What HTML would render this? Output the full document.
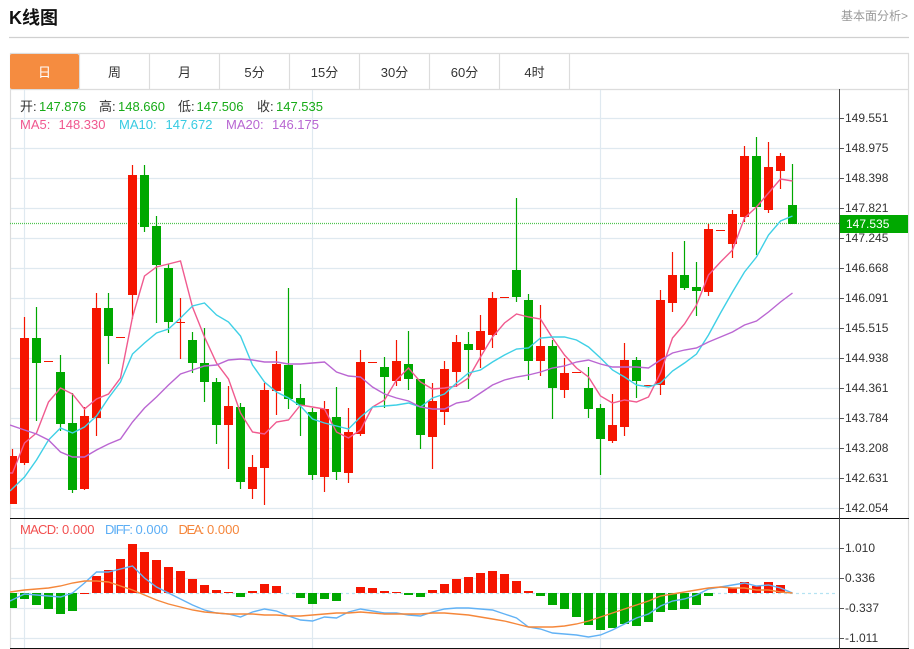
<!DOCTYPE html>
<html lang="zh">
<head>
<meta charset="utf-8">
<title>K线图</title>
<style>
html,body{margin:0;padding:0;background:#fff;overflow:hidden}
svg{display:block}
text{font-family:"Liberation Sans","Noto Sans CJK SC",sans-serif}
</style>
</head>
<body>
<svg width="914" height="649" viewBox="0 0 914 649" xmlns="http://www.w3.org/2000/svg">
<defs><clipPath id="c"><rect x="10" y="89" width="829" height="559"/></clipPath></defs>
<rect width="914" height="649" fill="#fff"/>
<text x="9" y="24" font-size="18" font-weight="bold" fill="#111">K线图</text>
<text x="841" y="20" font-size="12" fill="#999">基本面分析&gt;</text>
<path d="M9 37.5H909" stroke="#d0d0d0" stroke-width="1.2"/>
<!-- frame and tabs -->
<path d="M10 53.5H909M10 89.5H909M10.5 53V648M908.5 53V648M79.5 54V89M149.5 54V89M219.5 54V89M289.5 54V89M359.5 54V89M429.5 54V89M499.5 54V89M569.5 54V89" stroke="#dcdcdc" stroke-width="1.2" fill="none"/>
<rect x="10" y="54" width="69" height="35" rx="2" fill="#f58c40"/>
<g font-size="13" fill="#333" text-anchor="middle">
<text x="44.5" y="77" fill="#fff">日</text>
<text x="114.5" y="77">周</text>
<text x="184.5" y="77">月</text>
<text x="254.5" y="77">5分</text>
<text x="324.5" y="77">15分</text>
<text x="394.5" y="77">30分</text>
<text x="464.5" y="77">60分</text>
<text x="534.5" y="77">4时</text>
</g>
<!-- grid -->
<path d="M11 118.5H839M11 148.5H839M11 178.5H839M11 208.5H839M11 238.5H839M11 268.5H839M11 298.5H839M11 328.5H839M11 358.5H839M11 388.5H839M11 418.5H839M11 448.5H839M11 478.5H839M11 508.5H839M11 548.5H839M11 578.5H839M11 608.5H839M11 638.5H839M24.5 90V648M312.5 90V648M600.5 90V648" stroke="#dfe9f0" stroke-width="1.2" fill="none"/>
<g clip-path="url(#c)">
<path d="M10 223.5H839" stroke="#4ec44e" stroke-width="1.3" stroke-dasharray="1 1" fill="none"/>
<!-- red wicks -->
<path fill="none" stroke="#f51500" stroke-width="1.2" d="M12.5 449V504M24.5 317V465M84.5 407V490M96.5 293V436M132.5 165V319M180.5 298V359M228.5 386V469M252.5 455V499M264.5 383V505M276.5 351V415M324.5 401V492M348.5 408V483M360.5 350V436M396.5 340V386M432.5 383V469M444.5 361V425M456.5 335V387M480.5 315V368M492.5 292V348M540.5 305V376M564.5 358V398M612.5 394V443M624.5 343V436M660.5 290V395M672.5 252V312M708.5 224V296M732.5 210V258M744.5 146V222M768.5 142V213M780.5 153V189"/>
<!-- red bodies -->
<path fill="none" stroke="#f51500" stroke-width="9" d="M12.5 456V504M24.5 338V463M48.5 361V362M84.5 416V489M96.5 308V418M120.5 337V338M132.5 175V295M180.5 322V323M228.5 406V425M252.5 467V489M264.5 390V468M276.5 364V391M324.5 409V477M348.5 432V473M360.5 362V434M372.5 362V363M396.5 361V381M432.5 401V437M444.5 369V412M456.5 342V372M480.5 331V350M492.5 298V335M504.5 297V298M540.5 346V361M564.5 373V390M576.5 372V373M612.5 425V441M624.5 360V427M648.5 385V386M660.5 300V385M672.5 275V303M708.5 229V292M720.5 230V231M732.5 214V244M744.5 156V217M768.5 167V210M780.5 156V171"/>
<!-- green wicks -->
<path fill="none" stroke="#00a800" stroke-width="1.2" d="M36.5 307V421M60.5 355V431M72.5 393V493M108.5 293V364M144.5 165V232M156.5 216V323M168.5 264V333M192.5 332V373M204.5 328V402M216.5 378V444M240.5 403V489M288.5 288V409M300.5 384V436M312.5 408V480M336.5 387V480M384.5 357V408M408.5 331V390M420.5 379V449M468.5 332V389M516.5 198V302M528.5 294V380M552.5 340V419M588.5 367V418M600.5 404V475M636.5 357V398M684.5 241V290M696.5 262V316M756.5 137V255M792.5 164V224"/>
<!-- green bodies -->
<path fill="none" stroke="#00a800" stroke-width="9" d="M36.5 338V363M60.5 372V424M72.5 423V490M108.5 308V336M144.5 175V227M156.5 226V265M168.5 268V322M192.5 340V363M204.5 363V382M216.5 382V425M240.5 407V482M288.5 365V399M300.5 398V405M312.5 412V475M336.5 417V472M384.5 367V377M408.5 364V379M420.5 379V435M468.5 344V350M516.5 270V297M528.5 300V361M552.5 346V388M588.5 388V409M600.5 408V439M636.5 360V381M684.5 275V288M696.5 287V291M756.5 156V207M792.5 205V224"/>
<!-- MA5 -->
<polyline fill="none" stroke="#f05a8f" stroke-width="1.4" points="10,473 12.5,473 24.5,443 36.5,433 48.5,402 60.5,388 72.5,394 84.5,409 96.5,399 108.5,394 120.5,378 132.5,317 144.5,276 156.5,267 168.5,264 180.5,261 192.5,307 204.5,337 216.5,363 228.5,379 240.5,413 252.5,432 264.5,434 276.5,422 288.5,420 300.5,405 312.5,407 324.5,409 336.5,432 348.5,438 360.5,430 372.5,407 384.5,400 396.5,380 408.5,368 420.5,382 432.5,389 444.5,388 456.5,386 468.5,378 480.5,357 492.5,337 504.5,323 516.5,314 528.5,317 540.5,319 552.5,338 564.5,355 576.5,368 588.5,377 600.5,396 612.5,403 624.5,400 636.5,402 648.5,397 660.5,373 672.5,338 684.5,324 696.5,305 708.5,275 720.5,262 732.5,250 744.5,218 756.5,207 768.5,193 780.5,179 792.5,181"/>
<!-- MA10 -->
<polyline fill="none" stroke="#3fd0e6" stroke-width="1.4" points="10,491 24.5,477 36.5,460 48.5,440 60.5,428 72.5,433 84.5,427 96.5,416 108.5,398 120.5,382 132.5,354 144.5,343 156.5,333 168.5,329 180.5,318 192.5,306 204.5,303 216.5,315 228.5,322 240.5,336 252.5,365 264.5,382 276.5,392 288.5,398 300.5,406 312.5,419 324.5,423 336.5,426 348.5,429 360.5,417 372.5,407 384.5,406 396.5,405 408.5,403 420.5,407 432.5,398 444.5,394 456.5,383 468.5,373 480.5,370 492.5,362 504.5,355 516.5,349 528.5,348 540.5,338 552.5,337 564.5,337 576.5,340 588.5,347 600.5,358 612.5,370 624.5,377 636.5,385 648.5,387 660.5,383 672.5,371 684.5,363 696.5,354 708.5,335 720.5,313 732.5,292 744.5,272 756.5,257 768.5,235 780.5,221 792.5,216"/>
<!-- MA20 -->
<polyline fill="none" stroke="#ba66d2" stroke-width="1.4" points="10,425 24.5,430 36.5,434 48.5,440 60.5,452 72.5,457 84.5,457 96.5,450 108.5,444 120.5,439 132.5,422 144.5,408 156.5,397 168.5,385 180.5,374 192.5,370 204.5,366 216.5,365 228.5,360 240.5,359 252.5,360 264.5,362 276.5,362 288.5,364 300.5,364 312.5,363 324.5,362 336.5,372 348.5,376 360.5,377 372.5,387 384.5,394 396.5,398 408.5,401 420.5,407 432.5,409 444.5,409 456.5,403 468.5,401 480.5,393 492.5,385 504.5,380 516.5,377 528.5,375 540.5,372 552.5,368 564.5,366 576.5,362 588.5,360 600.5,364 612.5,367 624.5,367 636.5,367 648.5,368 660.5,360 672.5,353 684.5,350 696.5,348 708.5,342 720.5,337 732.5,332 744.5,325 756.5,321 768.5,312 780.5,302 792.5,293"/>
<!-- MACD -->
<path d="M10 593.5H836" stroke="#b5e3f2" stroke-width="1.3" stroke-dasharray="3 3" fill="none"/>
<path fill="none" stroke="#f51500" stroke-width="9" d="M84.5 593V594M96.5 576V593M108.5 570V593M120.5 559V593M132.5 544V593M144.5 552V593M156.5 560V593M168.5 567V593M180.5 571V593M192.5 579V593M204.5 585V593M216.5 590V593M228.5 592V593M252.5 591V593M264.5 584V593M276.5 586V593M360.5 587V593M372.5 588V593M384.5 591V593M396.5 592V593M432.5 590V593M444.5 584V593M456.5 579V593M468.5 577V593M480.5 573V593M492.5 571V593M504.5 574V593M516.5 581V593M528.5 591V593M732.5 588V593M744.5 582V593M756.5 586V593M768.5 582V593M780.5 585V593"/>
<path fill="none" stroke="#00a800" stroke-width="9" d="M12.5 593V608M24.5 593V599M36.5 593V605M48.5 593V609M60.5 593V614M72.5 593V611M240.5 593V597M300.5 593V598M312.5 593V604M324.5 593V599M336.5 593V601M408.5 593V595M420.5 593V597M540.5 593V596M552.5 593V605M564.5 593V609M576.5 593V617M588.5 593V625M600.5 593V630M612.5 593V628M624.5 593V624M636.5 593V626M648.5 593V622M660.5 593V612M672.5 593V610M684.5 593V609M696.5 593V605M708.5 593V596"/>
<polyline fill="none" stroke="#62b2f5" stroke-width="1.4" points="10,601 24.5,594 36.5,595 48.5,596 60.5,597 72.5,593 84.5,583 96.5,572 108.5,572 120.5,569 132.5,566 144.5,578 156.5,587 168.5,593 180.5,599 192.5,605 204.5,610 216.5,613 228.5,614 240.5,617 252.5,612 264.5,609 276.5,611 288.5,616 300.5,620 312.5,621 324.5,617 336.5,618 348.5,612 360.5,609 372.5,611 384.5,613 396.5,613 408.5,615 420.5,616 432.5,612 444.5,609 456.5,608 468.5,608 480.5,609 492.5,610 504.5,614 516.5,618 528.5,627 540.5,629 552.5,633 564.5,634 576.5,635 588.5,637 600.5,635 612.5,630 624.5,624 636.5,618 648.5,614 660.5,606 672.5,601 684.5,599 696.5,595 708.5,589 720.5,587 732.5,585 744.5,583 756.5,586 768.5,585 780.5,588 792.5,593"/>
<polyline fill="none" stroke="#f5873a" stroke-width="1.4" points="10,592 24.5,590 36.5,589 48.5,588 60.5,586 72.5,583 84.5,581 96.5,581 108.5,582 120.5,586 132.5,590 144.5,595 156.5,600 168.5,604 180.5,607 192.5,610 204.5,612 216.5,613 228.5,614 240.5,614 252.5,614 264.5,615 276.5,615 288.5,616 300.5,616 312.5,615 324.5,614 336.5,613 348.5,613 360.5,612 372.5,613 384.5,614 396.5,614 408.5,614 420.5,614 432.5,613 444.5,613 456.5,614 468.5,615 480.5,617 492.5,619 504.5,621 516.5,624 528.5,627 540.5,627 552.5,627 564.5,626 576.5,624 588.5,621 600.5,617 612.5,613 624.5,609 636.5,605 648.5,601 660.5,596 672.5,594 684.5,592 696.5,590 708.5,588 720.5,587 732.5,588 744.5,588 756.5,590 768.5,590 780.5,592 792.5,593"/>
</g>
<!-- axes -->
<path d="M10 518.5H909M10 648.5H909" stroke="#111" fill="none"/>
<path d="M839.5 89V649" stroke="#444" fill="none"/>
<path d="M840 118.5h4M840 148.5h4M840 178.5h4M840 208.5h4M840 238.5h4M840 268.5h4M840 298.5h4M840 328.5h4M840 358.5h4M840 388.5h4M840 418.5h4M840 448.5h4M840 478.5h4M840 508.5h4M840 548.5h4M840 578.5h4M840 608.5h4M840 638.5h4" stroke="#555" fill="none"/>
<g font-size="12" fill="#333">
<text x="845" y="122">149.551</text>
<text x="845" y="152">148.975</text>
<text x="845" y="182">148.398</text>
<text x="845" y="212">147.821</text>
<text x="845" y="242">147.245</text>
<text x="845" y="272">146.668</text>
<text x="845" y="302">146.091</text>
<text x="845" y="332">145.515</text>
<text x="845" y="362">144.938</text>
<text x="845" y="392">144.361</text>
<text x="845" y="422">143.784</text>
<text x="845" y="452">143.208</text>
<text x="845" y="482">142.631</text>
<text x="845" y="512">142.054</text>
<text x="845" y="552">1.010</text>
<text x="845" y="582">0.336</text>
<text x="845" y="612">-0.337</text>
<text x="845" y="642">-1.011</text>
</g>
<rect x="840" y="215" width="68" height="18" fill="#00a800"/>
<text x="846" y="228" font-size="12" fill="#fff">147.535</text>
<!-- info text -->
<g font-size="13">
<g fill="#333"><text x="20" y="111">开:</text><text x="99" y="111">高:</text><text x="178" y="111">低:</text><text x="257" y="111">收:</text></g>
<g fill="#17ab17"><text x="39" y="111">147.876</text><text x="118" y="111">148.660</text><text x="196.5" y="111">147.506</text><text x="276" y="111">147.535</text></g>
<g fill="#f0588f"><text x="20" y="129">MA5:</text><text x="58.5" y="129">148.330</text></g>
<g fill="#38cbe2"><text x="119" y="129">MA10:</text><text x="165.5" y="129">147.672</text></g>
<g fill="#b866d2"><text x="226" y="129">MA20:</text><text x="272" y="129">146.175</text></g>
<g fill="#f25050"><text x="20" y="534" textLength="39">MACD:</text><text x="62" y="534">0.000</text></g>
<g fill="#5caef5"><text x="105" y="534" textLength="28">DIFF:</text><text x="135.5" y="534">0.000</text></g>
<g fill="#f5853a"><text x="178.5" y="534" textLength="26">DEA:</text><text x="207" y="534">0.000</text></g>
</g>
</svg>
</body>
</html>
